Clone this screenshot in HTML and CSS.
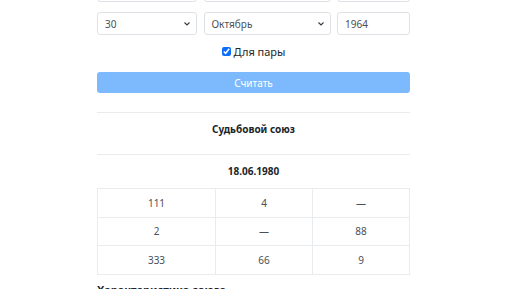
FILE: index.html
```html
<!DOCTYPE html>
<html lang="ru">

<head>
    <meta charset="UTF-8">
    <meta name="viewport" content="width=device-width, initial-scale=1.0">
    <title>Судьбовой союз</title>
    <link rel="stylesheet" href="styles.css">
</head>

<body>
    <div class="page">
        <!-- first person's date, scrolled above the view -->
        <div class="date-row">
            <div class="field select"></div>
            <div class="field select"></div>
            <div class="field"></div>
        </div>
        <div class="date-row">
            <div class="field select"><span>30</span><svg class="chev" viewBox="0 0 6 4"><path d="M0.5 0.5 L3 3 L5.5 0.5" /></svg></div>
            <div class="field select"><span>Октябрь</span><svg class="chev" viewBox="0 0 6 4"><path d="M0.5 0.5 L3 3 L5.5 0.5" /></svg></div>
            <div class="field"><span>1964</span></div>
        </div>

        <label class="pair-check">
            <input type="checkbox" checked> Для пары
        </label>

        <button class="action-button" disabled>Считать</button>

        <hr>
        <div class="title">Судьбовой союз</div>
        <hr>
        <div class="date">18.06.1980</div>

        <table class="matrix">
            <tr><td>111</td><td>4</td><td>—</td></tr>
            <tr><td>2</td><td>—</td><td>88</td></tr>
            <tr><td>333</td><td>66</td><td>9</td></tr>
        </table>

        <div class="next-title">Характеристика союза</div>
    </div>
</body>

</html>
```
FILE: styles.css
```css
body {
    margin: 0;
    font-family: "Noto Sans", "Open Sans", sans-serif;
    background-color: #fff;
    color: #212529;
}

.page {
    width: 313px;
    margin: -21px 0 0 97px;
}

.date-row {
    display: grid;
    grid-template-columns: 100px 127px 73px;
    column-gap: 6.5px;
    margin-bottom: 9px;
}

.date-row:first-child {
    margin-bottom: 10px;
}

.field {
    height: 23px;
    box-sizing: border-box;
    border: 1px solid #dee2e6;
    border-radius: 3px;
    padding: 0 6px 0 7px;
    display: flex;
    align-items: center;
    justify-content: space-between;
    font-size: 10px;
    color: #495057;
}

.chev {
    width: 6px;
    height: 4px;
}

.chev path {
    fill: none;
    stroke: #343a40;
    stroke-width: 1.1;
}

.pair-check {
    display: flex;
    justify-content: center;
    align-items: center;
    gap: 3px;
    height: 14px;
    font-size: 11px;
    color: #212529;
}

.pair-check input {
    width: 9px;
    height: 9px;
    margin: 0;
    accent-color: #0d6efd;
}

.action-button {
    display: block;
    width: 100%;
    height: 21px;
    margin-top: 14px;
    border: none;
    border-radius: 3px;
    background-color: #7cbafd;
    color: #fff;
    font-family: inherit;
    font-size: 10px;
    padding: 0;
}

hr {
    border: none;
    border-top: 1px solid #e9ecef;
    margin: 0;
}

.action-button + hr {
    margin-top: 19px;
}

.title {
    line-height: 14px;
    padding: 9px 0 18px;
    text-align: center;
    font-weight: bold;
    font-size: 10px;
}

.date {
    line-height: 14px;
    padding: 9px 0 10px;
    text-align: center;
    font-weight: bold;
    font-size: 10px;
}

.matrix {
    width: 100%;
    border-collapse: collapse;
    font-size: 10px;
    color: #495057;
}

.matrix td {
    border: 1px solid #e9ecef;
    height: 27.6px;
    padding: 0;
    text-align: center;
}

.matrix td:nth-child(1) {
    width: 117px;
}

.matrix td:nth-child(2) {
    width: 96px;
}

.next-title {
    margin-top: 7px;
    font-weight: bold;
    font-size: 11px;
}
```
